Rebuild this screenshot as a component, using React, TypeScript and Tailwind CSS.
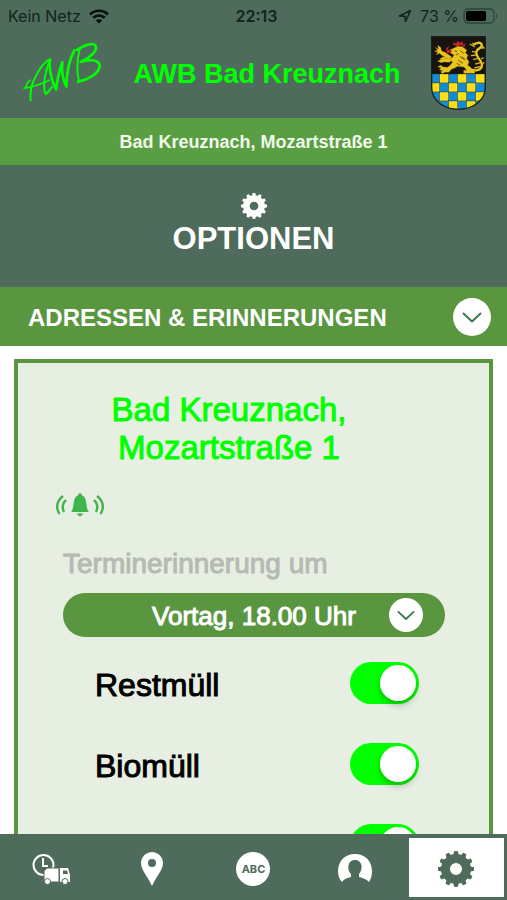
import type { ReactNode } from "react";

function Gear({ className, hole }: { className: string; hole: number }) {
  const teeth = Array.from({ length: 12 }, (_, i) => i * 30);
  return (
    <svg viewBox="-18 -18 36 36" className={className} aria-hidden="true">
      <circle r={(15 + hole) / 2} fill="none" stroke="currentColor" strokeWidth={15 - hole} />
      {teeth.map((a) => (
        <path key={a} transform={`rotate(${a})`} d="M-2.6 -14L-2 -17.2Q-1.8 -18 -1 -18H1Q1.8 -18 2 -17.2L2.6 -14Z" fill="currentColor" />
      ))}
    </svg>
  );
}

function Logo() {
  return (
    <svg viewBox="70 125 240 185" className="h-[62px] w-20" fill="none" stroke="#00ff00" strokeLinecap="round" strokeLinejoin="round" aria-label="AWB" role="img">
      <path strokeWidth="6" d="M93 302C91 285 93 268 100 248C112 217 132 187 152 179C146 194 136 222 134 246C133 262 134 276 138 284C145 278 151 271 157 262" />
      <path strokeWidth="5" d="M73 266C95 263 122 255 149 242M80 261C78 254 86 248 91 242" />
      <path strokeWidth="8" d="M151 181C147 205 155 242 169 270C173 238 181 207 188 188C185 215 190 242 200 261C201 224 208 181 224 153" />
      <path strokeWidth="6" d="M240 149C232 180 231 216 238 246" />
      <path strokeWidth="8" d="M232 151C252 136 281 128 288 139C295 153 270 176 243 187C272 178 301 181 300 201C298 222 266 239 235 247" />
    </svg>
  );
}

function Crest() {
  const cells: ReactNode[] = [];
  for (let row = 0; row < 4; row++) {
    for (let col = 0; col < 6; col++) {
      cells.push(
        <rect key={`${row}-${col}`} x={-1 + col * 27} y={114 + row * 27} width="28" height="27" fill={(row + col) % 2 ? "#ffdf12" : "#118bd3"} stroke="#25332d" strokeWidth="1" />,
      );
    }
  }
  return (
    <svg viewBox="0 0 165 222" className="h-[74px] w-[55px]" role="img" aria-label="Wappen Bad Kreuznach">
      <defs>
        <clipPath id="shield">
          <path d="M2 2H163V154C163 194 126 220 82 220C38 220 2 194 2 154Z" />
        </clipPath>
      </defs>
      <g clipPath="url(#shield)">
        <rect width="165" height="222" fill="#17130f" />
        {cells}
        <g fill="#e9c51d" stroke="#8e7411" strokeWidth="1">
          <path d="M69 36L80 31L94 32L108 43L103 50L111 58L107 67L114 77L110 88L119 94L118 103L130 105L132 112H98L98 103L107 103L99 93L80 91L70 97L61 100L54 109L41 109L34 113L29 107L35 104L25 101L30 96L20 92L29 88L37 93L50 94L58 87L65 78L55 73L43 70L31 74L27 68L34 64L45 61L64 65L69 57L58 51L62 44L56 42Z" />
          <path d="M12 34L22 39L20 28L29 34L32 45L42 49L62 62L54 70L32 58L25 52L16 57L20 48L10 46L20 42Z" />
          <path d="M30 71L19 75L30 80L39 78L56 79L63 71L46 67Z" />
        </g>
        <path d="M112 95C125 109 149 103 152 92C158 75 134 66 136 48C138 34 156 38 152 26C149 17 134 20 129 26" fill="none" stroke="#e9c51d" strokeWidth="7" />
        <path d="M125 20L129 31L116 24M153 30L160 36L150 36M136 49L123 46M135 57L120 59M142 67L127 71M149 80L133 84M149 91L130 96M150 69L158 65M153 84L160 79" fill="none" stroke="#d5b41b" strokeWidth="4" />
        <path d="M78 47L71 44M83 53L74 57M88 44L98 52M86 61L98 70M82 73L96 82M77 82L87 87M94 62L103 73" fill="none" stroke="#65520d" strokeWidth="3" />
        <path d="M67 26L67 17L75 23L80 14L87 21L94 15L97 27L104 20L100 34L91 27L80 31Z" fill="#d21e31" />
        <path d="M46 43L48 51L61 50L57 41L49 42L55 30L45 37Z" fill="#d21e31" />
      </g>
      <path d="M2 2H163V154C163 194 126 220 82 220C38 220 2 194 2 154Z" fill="none" stroke="#17201c" strokeWidth="4" />
    </svg>
  );
}

function ChevronDisc({ className }: { className: string }) {
  return (
    <svg viewBox="0 0 38 38" className={className} aria-hidden="true">
      <circle cx="19" cy="19" r="19" fill="#fff" />
      <path d="M10.500 15.500L19 23.500L27.500 15.500" fill="none" stroke="#3c7a4e" strokeWidth="2" strokeLinecap="round" strokeLinejoin="round" />
    </svg>
  );
}

function StatusBar() {
  return (
    <div className="grid h-8 grid-cols-3 items-center px-2 font-[Inter,sans-serif] text-base text-[#14241b]">
      <div className="flex items-center gap-2">
        <span>Kein Netz</span>
        <svg viewBox="0 0 20 15" className="h-[15px] w-5" fill="none" stroke="#07100b" strokeWidth="2.600" aria-hidden="true">
          <path d="M1 5.500C6 .5 14 .5 19 5.500M4.300 8.800C7.500 5.700 12.500 5.700 15.700 8.800" />
          <path d="M10 14.500L6.800 11.400C8.600 9.700 11.400 9.700 13.200 11.400Z" fill="#07100b" stroke="none" />
        </svg>
      </div>
      <span className="pl-[6px] text-center font-semibold">22:13</span>
      <div className="flex items-center justify-end gap-1">
        <svg viewBox="0 0 14 14" className="size-[14px]" fill="none" stroke="currentColor" strokeWidth="1.600" strokeLinejoin="round" aria-hidden="true">
          <path d="M1.500 7L12.500 1.500L7.500 12.500L7 7.200Z" />
        </svg>
        <span className="ml-1 whitespace-nowrap">73 %</span>
        <svg viewBox="0 0 36 16" className="h-4 w-9" aria-hidden="true">
          <rect x="1" y="1" width="30" height="14" rx="4" fill="none" stroke="#2d4438" strokeWidth="1.300" />
          <rect x="3" y="3" width="20" height="10" rx="2" fill="#000" />
          <path d="M33 5.500Q35.500 8 33 10.500Z" fill="#2d4438" />
        </svg>
      </div>
    </div>
  );
}

function ToggleRow({ label }: { label: string }) {
  return (
    <label className="flex h-[42px] items-center justify-between">
      <span className="pt-1 text-[32px] leading-10 text-black [-webkit-text-stroke:1px]">{label}</span>
      <input
        type="checkbox"
        role="switch"
        defaultChecked
        className="flex h-[42px] w-[69px] shrink-0 appearance-none items-center rounded-full bg-gray-300 px-[3px] before:size-9 before:rounded-full before:bg-white before:shadow-[0_4px_6px_rgba(0,0,0,0.25)] before:content-[''] checked:justify-end checked:bg-[#00ff00]"
      />
    </label>
  );
}

function TabButton({ label, active, children }: { label: string; active?: boolean; children: ReactNode }) {
  return (
    <button
      type="button"
      aria-label={label}
      aria-current={active ? "page" : undefined}
      className={active ? "flex items-center justify-center bg-white pt-[3px] text-[#4e6b5b]" : "flex items-center justify-center pt-[3px] text-white"}
    >
      {children}
    </button>
  );
}

function TabBar() {
  return (
    <nav className="grid h-[66px] shrink-0 grid-cols-5 gap-[6px] bg-[#4e6b5b] px-[3px] pt-1 pb-[3px]">
      <TabButton label="Abfuhrtermine">
        <svg viewBox="0 0 38 32" className="h-8 w-[38px]" aria-hidden="true">
          <circle cx="11.500" cy="12" r="10" fill="none" stroke="#fff" strokeWidth="2" />
          <path d="M11 5V13H16" fill="none" stroke="#fff" strokeWidth="2" />
          <path d="M15 15H27V29H12V18Z" fill="#fff" stroke="#4e6b5b" strokeWidth="1" />
          <path d="M28 15H36L38 22V29H28Z" fill="#fff" />
          <path d="M31 17.500H35L36 21H31Z" fill="#4e6b5b" />
          <g fill="#fff" stroke="#4e6b5b" strokeWidth="1">
            <circle cx="15.500" cy="28.500" r="3" />
            <circle cx="33" cy="28.500" r="3" />
          </g>
        </svg>
      </TabButton>
      <TabButton label="Standorte">
        <svg viewBox="0 0 22 34" className="h-[34px] w-[22px]" aria-hidden="true">
          <path fillRule="evenodd" d="M11 0C17 0 22 5 22 11C22 18 15 25 11 34C7 25 0 18 0 11C0 5 5 0 11 0ZM11 7A4 4 0 1 0 11 15A4 4 0 1 0 11 7Z" fill="currentColor" />
        </svg>
      </TabButton>
      <TabButton label="Abfall-ABC">
        <span className="flex size-[34px] items-center justify-center rounded-full bg-white font-[Inter,sans-serif] text-[11px] font-bold text-[#4e6b5b]">ABC</span>
      </TabButton>
      <TabButton label="Kontakt">
        <svg viewBox="0 0 34 30" className="h-[30px] w-[34px]" aria-hidden="true">
          <path d="M4 28C1 25 0 21 0 17C0 7 7 0 17 0S34 7 34 17C34 21 33 25 31 28C28 25 25 24 21 23V20C25 16 25 6 17 6S9 16 13 20V23C9 24 6 25 4 28Z" fill="currentColor" />
        </svg>
      </TabButton>
      <TabButton label="Optionen" active>
        <Gear className="size-9" hole={6} />
      </TabButton>
    </nav>
  );
}

export default function App() {
  return (
    <div className="flex h-screen flex-col overflow-hidden bg-white font-['Liberation_Sans',Arial,sans-serif]">
      <header className="shrink-0 bg-[#4e6b5b]">
        <StatusBar />
        <div className="flex h-[86px] items-start justify-between pr-[21px] pl-[23px]">
          <div className="pt-[9px]">
            <Logo />
          </div>
          <h1 className="pt-[26px] text-[27px] leading-8 font-bold whitespace-nowrap text-[#00ff00]">AWB Bad Kreuznach</h1>
          <div className="pt-1">
            <Crest />
          </div>
        </div>
        <p className="bg-[#5a9e43] pt-[2px] text-center text-lg leading-[45px] font-bold text-[#f1faeb]">Bad Kreuznach, Mozartstraße 1</p>
      </header>

      <main className="min-h-0 flex-1 overflow-y-auto [scrollbar-width:none]">
        <div className="flex h-[122px] flex-col items-center bg-[#4e6b5b] pt-7 text-white">
          <Gear className="size-[26px]" hole={6} />
          <h2 className="text-[31px] leading-10 font-bold">OPTIONEN</h2>
        </div>

        <button type="button" aria-expanded="true" className="flex h-[59px] w-full items-center justify-between bg-[#59963f] pr-4 pl-7 text-white">
          <span className="pt-[2px] text-2xl font-bold">ADRESSEN &amp; ERINNERUNGEN</span>
          <ChevronDisc className="size-[38px]" />
        </button>

        <section className="mx-[14px] my-[13px] border-4 border-[#59963f] bg-[#e7efe3] pt-7 pr-11 pb-6 pl-[45px]">
          <h3 className="mr-[50px] text-center text-[33px] leading-[38px] text-[#00ff00] [-webkit-text-stroke:1px]">
            Bad Kreuznach,
            <br />
            Mozartstraße 1
          </h3>

          <svg viewBox="0 0 48 24" className="-ml-[7px] mt-[26px] h-6 w-12" fill="none" stroke="#40b54b" strokeWidth="2.400" aria-hidden="true">
            <path d="M7 3C0 8 0 16 3.500 21M10 7C6 11 6 15 8 19M41 3C48 8 48 16 44.500 21M38 7C42 11 42 15 40 19" />
            <path d="M15 19C19 15 16 4 22 2.500C22 -.5 26 -.5 26 2.500C32 4 29 15 33 19ZM21 20.500H27C26 24 22 24 21 20.500Z" fill="#40b54b" stroke="none" />
          </svg>

          <label htmlFor="reminder" className="mt-[29px] block text-[28px] leading-9 text-[#b5bbb2] [-webkit-text-stroke:1px]">
            Terminerinnerung um
          </label>
          <div className="relative mt-[11px]">
            <select id="reminder" defaultValue="eve" className="block h-11 w-full appearance-none rounded-full bg-[#59963f] px-14 pt-[2px] text-center text-[26px] text-white [-webkit-text-stroke:1px]">
              <option value="eve">Vortag, 18.00 Uhr</option>
              <option value="day">Am Tag, 6.00 Uhr</option>
            </select>
            <span className="pointer-events-none absolute inset-y-0 right-[22px] flex items-center">
              <ChevronDisc className="size-[34px]" />
            </span>
          </div>

          <div className="mt-[25px] mr-[26px] ml-8 flex flex-col gap-[39px]">
            <ToggleRow label="Restmüll" />
            <ToggleRow label="Biomüll" />
            <ToggleRow label="Papier" />
          </div>
        </section>
      </main>

      <TabBar />
    </div>
  );
}
